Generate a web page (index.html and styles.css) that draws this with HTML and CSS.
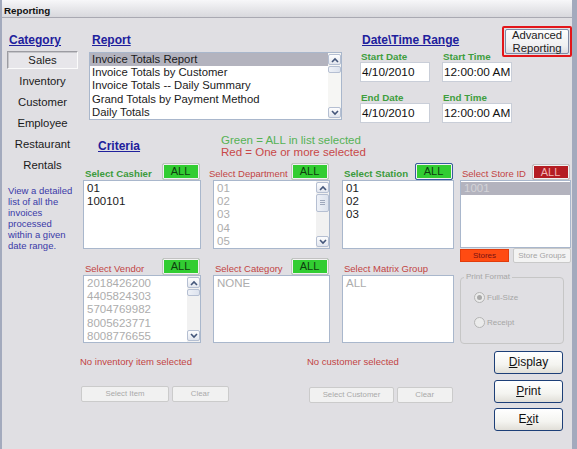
FILE: index.html
```html
<!DOCTYPE html>
<html lang="en">

<head>
    <meta charset="UTF-8">
    <meta name="viewport" content="width=device-width, initial-scale=1.0">
    <title>Reporting</title>
    <link rel="stylesheet" href="styles.css">
</head>

<body>
    <div class="window">
        <div class="titlebar">Reporting</div>
        <div class="client">
            <!-- left: category list -->
            <div class="category">
                <div class="head">Category</div>
                <div class="cat-active">Sales</div>
                <div class="cat-list">
                    <div class="cat-item">Inventory</div>
                    <div class="cat-item">Customer</div>
                    <div class="cat-item">Employee</div>
                    <div class="cat-item">Restaurant</div>
                    <div class="cat-item">Rentals</div>
                </div>
                <div class="desc">View a detailed<br>list of all the<br>invoices<br>processed<br>within a given<br>date range.</div>
            </div>

            <div class="main">
                <div class="top">
                    <div class="report">
                        <div class="head">Report</div>
                        <div class="listbox report-list">
                            <div class="items">
                                <div class="item sel">Invoice Totals Report</div>
                                <div class="item">Invoice Totals by Customer</div>
                                <div class="item">Invoice Totals -- Daily Summary</div>
                                <div class="item">Grand Totals by Payment Method</div>
                                <div class="item">Daily Totals</div>
                            </div>
                            <div class="sb">
                                <span class="sb-btn"><svg width="8" height="6" viewBox="0 0 8 6"><polyline points="1,5 4,2 7,5" /></svg></span>
                                <span class="thumb thumb-sm"></span>
                                <span class="sb-fill"></span>
                                <span class="sb-btn"><svg width="8" height="6" viewBox="0 0 8 6"><polyline points="1,1 4,4 7,1" /></svg></span>
                            </div>
                        </div>
                    </div>

                    <div class="dates">
                        <div class="dates-head">
                            <div class="head">Date\Time Range</div>
                            <div class="adv">
                                <div class="adv-btn"><span>Advanced</span><span>Reporting</span></div>
                            </div>
                        </div>
                        <div class="fields">
                            <div class="field">
                                <span class="field-label">Start Date</span>
                                <span class="input">4/10/2010</span>
                            </div>
                            <div class="field">
                                <span class="field-label">Start Time</span>
                                <span class="input">12:00:00 AM</span>
                            </div>
                            <div class="field">
                                <span class="field-label">End Date</span>
                                <span class="input">4/10/2010</span>
                            </div>
                            <div class="field">
                                <span class="field-label">End Time</span>
                                <span class="input">12:00:00 AM</span>
                            </div>
                        </div>
                    </div>
                </div>

                <div class="crit-head">
                    <div class="head crit-title">Criteria</div>
                    <div class="legend">
                        <div class="legend-green">Green = ALL in list selected</div>
                        <div class="legend-red">Red = One or more selected</div>
                    </div>
                </div>

                <div class="crit">
                    <div class="col c1">
                        <div class="cell-head">
                            <span class="lbl lbl-green">Select Cashier</span>
                            <span class="all">ALL</span>
                        </div>
                        <div class="listbox list-tall">
                            <div class="items">
                                <div class="item">01</div>
                                <div class="item">100101</div>
                            </div>
                        </div>
                        <div class="cell-head row2">
                            <span class="lbl lbl-red">Select Vendor</span>
                            <span class="all">ALL</span>
                        </div>
                        <div class="listbox list-short">
                            <div class="items dim">
                                <div class="item">2018426200</div>
                                <div class="item">4405824303</div>
                                <div class="item">5704769982</div>
                                <div class="item">8005623771</div>
                                <div class="item">8008776655</div>
                            </div>
                            <div class="sb sb-dis">
                                <span class="sb-btn"><svg width="8" height="6" viewBox="0 0 8 6"><polyline points="1,5 4,2 7,5" /></svg></span>
                                <span class="thumb thumb-sm"></span>
                                <span class="sb-fill"></span>
                                <span class="sb-btn"><svg width="8" height="6" viewBox="0 0 8 6"><polyline points="1,1 4,4 7,1" /></svg></span>
                            </div>
                        </div>
                    </div>

                    <div class="col c2">
                        <div class="cell-head">
                            <span class="lbl lbl-red lbl-dept">Select Department</span>
                            <span class="all">ALL</span>
                        </div>
                        <div class="listbox list-tall">
                            <div class="items dim">
                                <div class="item">01</div>
                                <div class="item">02</div>
                                <div class="item">03</div>
                                <div class="item">04</div>
                                <div class="item">05</div>
                            </div>
                            <div class="sb sb-dis">
                                <span class="sb-btn"><svg width="8" height="6" viewBox="0 0 8 6"><polyline points="1,5 4,2 7,5" /></svg></span>
                                <span class="thumb thumb-lg"></span>
                                <span class="sb-fill"></span>
                                <span class="sb-btn"><svg width="8" height="6" viewBox="0 0 8 6"><polyline points="1,1 4,4 7,1" /></svg></span>
                            </div>
                        </div>
                        <div class="cell-head row2">
                            <span class="lbl lbl-red">Select Category</span>
                            <span class="all">ALL</span>
                        </div>
                        <div class="listbox list-short">
                            <div class="items dim">
                                <div class="item">NONE</div>
                            </div>
                        </div>
                    </div>

                    <div class="col c3">
                        <div class="cell-head">
                            <span class="lbl lbl-green">Select Station</span>
                            <span class="all all-focus">ALL</span>
                        </div>
                        <div class="listbox list-tall">
                            <div class="items">
                                <div class="item">01</div>
                                <div class="item">02</div>
                                <div class="item">03</div>
                            </div>
                        </div>
                        <div class="cell-head row2">
                            <span class="lbl lbl-red">Select Matrix Group</span>
                        </div>
                        <div class="listbox list-short">
                            <div class="items dim">
                                <div class="item">ALL</div>
                            </div>
                        </div>
                    </div>

                    <div class="col c4">
                        <div class="cell-head">
                            <span class="lbl lbl-red">Select Store ID</span>
                            <span class="all all-red">ALL</span>
                        </div>
                        <div class="listbox store-list">
                            <div class="items dim">
                                <div class="item sel">1001</div>
                            </div>
                        </div>
                        <div class="store-tabs">
                            <span class="stores">Stores</span>
                            <span class="store-groups">Store Groups</span>
                        </div>
                        <fieldset class="print">
                            <legend>Print Format</legend>
                            <div class="radio first"><span class="dot on"></span>Full-Size</div>
                            <div class="radio"><span class="dot"></span>Receipt</div>
                        </fieldset>
                    </div>
                </div>

                <div class="bottom">
                    <div class="grp grp1">
                        <div class="msg">No inventory item selected</div>
                        <div class="btn-row">
                            <span class="dis-btn w88">Select Item</span>
                            <span class="dis-btn w57">Clear</span>
                        </div>
                    </div>
                    <div class="grp grp2">
                        <div class="msg">No customer selected</div>
                        <div class="btn-row">
                            <span class="dis-btn w85">Select Customer</span>
                            <span class="dis-btn w56">Clear</span>
                        </div>
                    </div>
                    <div class="actions">
                        <div class="xp-btn"><u>D</u>isplay</div>
                        <div class="xp-btn"><u>P</u>rint</div>
                        <div class="xp-btn">E<u>x</u>it</div>
                    </div>
                </div>
            </div>
        </div>
    </div>
</body>

</html>
```

FILE: styles.css
```css
* {
    box-sizing: border-box;
}

body {
    margin: 0;
    font-family: "Liberation Sans", Arial, sans-serif;
    background-color: #e0dfe3;
}

.window {
    width: 577px;
    height: 449px;
    background-color: #e0dfe3;
    border-left: 2px solid #a3aabd;
    border-right: 5px solid #a3aabd;
    overflow: hidden;
}

.titlebar {
    height: 18px;
    padding: 4px 0 0 2px;
    font-size: 9.8px;
    line-height: 14px;
    font-weight: bold;
    color: #111;
    background: linear-gradient(#f7f7f9, #e9e9ec 45%, #d8d8dd);
    border-bottom: 1px solid #a9a9b2;
}

.client {
    display: flex;
    height: 431px;
}

.head {
    font-size: 12px;
    line-height: 14px;
    font-weight: bold;
    color: #20209c;
    text-decoration: underline;
}

/* category column */
.category {
    width: 78px;
    padding-top: 15px;
}

.category .head {
    padding-left: 7px;
}

.cat-active {
    width: 71px;
    height: 18px;
    margin: 4px 0 0 5px;
    border: 1px solid;
    border-color: #9c9ca2 #fbfbfb #fbfbfb #9c9ca2;
    box-shadow: inset 1px 1px 0 #c6c6ca;
    background-color: #e7e6ea;
    text-align: center;
    font-size: 11.3px;
    line-height: 16px;
    color: #1a1a1a;
}

.cat-list {
    width: 71px;
    margin: 2px 0 0 5px;
}

.cat-item {
    text-align: center;
    font-size: 11.3px;
    line-height: 21px;
    color: #1a1a1a;
}

.desc {
    margin-top: 9px;
    padding-left: 6px;
    font-size: 9.5px;
    line-height: 11px;
    color: #3a3aa8;
}

/* main area */
.main {
    width: 492px;
}

.top {
    display: flex;
    height: 105px;
    padding-top: 8px;
}

.report {
    width: 253px;
    margin-left: 9px;
    padding-top: 7px;
}

.report .head {
    padding-left: 3px;
}

.listbox {
    display: flex;
    background-color: #fff;
    border: 1px solid #a9b7cc;
}

.report-list {
    height: 68px;
    margin-top: 5px;
}

.items {
    flex: 1;
    padding-top: 1px;
    font-size: 11.5px;
    line-height: 13.2px;
    color: #1a1a1a;
    white-space: nowrap;
    overflow: hidden;
}

.report-list .items {
    padding-top: 0;
    font-size: 11.3px;
}

.item {
    padding-left: 3px;
}

.report-list .item {
    padding-left: 2px;
}

.item.sel {
    background-color: #b3b3be;
}

.dim .item {
    color: #adadad;
}

.dim .item.sel {
    color: #d4d4d8;
}

/* scrollbars */
.sb {
    display: flex;
    flex-direction: column;
    width: 13px;
    padding: 1px 0;
    background-color: #f6f6f4;
}

.sb-dis {
    background-color: #f1f1f1;
}

.sb-btn {
    display: flex;
    justify-content: center;
    align-items: center;
    height: 11px;
    border: 1px solid #b5bfd2;
    border-radius: 2px;
    background: linear-gradient(#fdfdfe, #e2e6ee);
}

.sb-btn svg polyline {
    fill: none;
    stroke: #44567a;
    stroke-width: 1.6;
}

.thumb {
    margin-top: 1px;
    border: 1px solid #b5bfd2;
    border-radius: 2px;
    background: linear-gradient(90deg, #eef1f7, #dde3ee);
}

.thumb-sm {
    height: 7px;
}

.thumb-lg {
    height: 18px;
}

.thumb-lg::after {
    content: "";
    display: block;
    width: 5px;
    height: 5px;
    margin: 5px auto 0;
    background: repeating-linear-gradient(#9ea8bc 0 1px, transparent 1px 2px);
}

.sb-fill {
    flex: 1;
}

/* date / time */
.dates {
    width: 212px;
    margin-left: 18px;
}

.dates-head {
    display: flex;
    justify-content: space-between;
    height: 25px;
}

.dates-head .head {
    margin-top: 7px;
    padding-left: 2px;
}

.adv {
    flex-shrink: 0;
    width: 70px;
    height: 31px;
    padding: 1px;
    border: 2px solid #e3161a;
    border-radius: 2px;
}

.adv-btn {
    display: flex;
    flex-direction: column;
    justify-content: center;
    align-items: center;
    height: 100%;
    border: 1px solid #7e8aa6;
    border-radius: 2px;
    background: linear-gradient(#fdfdfd, #efeff1 70%, #dcdce2);
    font-size: 11.3px;
    line-height: 13px;
    color: #222;
}

.fields {
    display: grid;
    grid-template-columns: 70px 70px;
    column-gap: 12px;
    row-gap: 10px;
}

.field-label {
    display: block;
    padding-left: 1px;
    font-size: 9.8px;
    line-height: 11px;
    font-weight: bold;
    color: #3e9e3e;
}

.input {
    display: block;
    height: 20px;
    padding-left: 1px;
    background-color: #fff;
    border: 1px solid #c9ced8;
    font-size: 11.8px;
    line-height: 18px;
    color: #111;
    white-space: nowrap;
    overflow: hidden;
}

/* criteria */
.crit-head {
    display: flex;
    height: 29px;
    margin-top: 11px;
}

.crit-title {
    width: 141px;
    padding: 5px 0 0 18px;
}

.legend {
    font-size: 11.5px;
    line-height: 12.3px;
}

.legend-green {
    color: #55b255;
}

.legend-red {
    color: #c84848;
}

.crit {
    display: flex;
    height: 181px;
    margin-left: 3px;
}

.c1 {
    width: 130px;
    padding-right: 12px;
}

.c2 {
    width: 129px;
    padding-right: 12px;
}

.c3 {
    width: 118px;
    padding-right: 6px;
}

.c4 {
    width: 111px;
}

.cell-head {
    display: flex;
    justify-content: space-between;
    align-items: flex-end;
    height: 17px;
}

.row2 {
    margin-top: 9px;
}

.lbl {
    padding-left: 2px;
    font-size: 9.5px;
    line-height: 12px;
    white-space: nowrap;
}

.lbl-green {
    font-size: 9.7px;
    font-weight: bold;
    color: #3b9b3b;
}

.lbl-red {
    color: #c24444;
}

.lbl-dept {
    margin-left: -6px;
}

.all {
    align-self: flex-start;
    width: 38px;
    height: 17px;
    margin-right: 1.5px;
    border: 1px solid #c2c2c2;
    border-radius: 2px;
    background-color: #32cd32;
    box-shadow: inset 0 0 0 1px #f2f2f2;
    text-align: center;
    font-size: 11px;
    line-height: 15px;
    color: #0f3d0f;
}

.all-focus {
    border-color: #3a5ba0;
}

.all-red {
    height: 16px;
    margin-top: 1px;
    background-color: #b41c22;
    line-height: 14px;
    color: #f2b4b4;
}

.list-tall {
    height: 69px;
}

.list-short {
    height: 68px;
}

.store-list {
    height: 68px;
}

.store-tabs {
    display: flex;
    justify-content: space-between;
    align-items: center;
    height: 15px;
}

.stores {
    width: 49px;
    height: 13px;
    background-color: #ff4b12;
    border: 1px solid #e23c0c;
    text-align: center;
    font-size: 8px;
    line-height: 11px;
    color: #7a1212;
}

.store-groups {
    width: 58px;
    height: 15px;
    background-color: #f3f3f3;
    border: 1px solid #c9c9c9;
    border-radius: 2px;
    text-align: center;
    font-size: 8px;
    line-height: 13px;
    color: #a5a5a5;
}

.print {
    width: 104px;
    height: 73px;
    margin: 8px 0 0;
    padding: 0;
    border: 1px solid #c6c6c6;
    border-radius: 4px;
}

.print legend {
    margin-left: 3px;
    padding: 0 2px;
    font-size: 8px;
    line-height: 12px;
    color: #a6a6a6;
}

.radio {
    display: flex;
    align-items: center;
    gap: 2px;
    height: 13px;
    margin: 12px 0 0 13px;
    font-size: 8px;
    color: #a6a6a6;
}

.radio.first {
    margin-top: 8px;
}

.dot {
    display: flex;
    justify-content: center;
    align-items: center;
    width: 11px;
    height: 11px;
    border: 1px solid #b4b4b4;
    border-radius: 50%;
    background-color: #ebebeb;
}

.dot.on::after {
    content: "";
    width: 5px;
    height: 5px;
    border-radius: 50%;
    background-color: #a9a9a9;
}

/* bottom */
.bottom {
    display: flex;
    height: 87px;
}

.grp1 {
    width: 227px;
}

.grp2 {
    width: 146px;
}

.msg {
    margin-top: 12px;
    font-size: 9.5px;
    line-height: 12px;
    color: #c24444;
}

.btn-row {
    display: flex;
    gap: 2.7px;
    margin-top: 18px;
    padding-left: 1px;
}

.grp2 .btn-row {
    margin-top: 19px;
    padding-left: 2px;
}

.dis-btn {
    height: 16px;
    border: 1px solid #cbcbcb;
    border-radius: 2px;
    background-color: #f1f1f1;
    text-align: center;
    font-size: 7.8px;
    line-height: 14px;
    color: #a9a9a9;
}

.w88 {
    width: 88px;
}

.w57 {
    width: 57px;
}

.w85 {
    width: 85px;
}

.w56 {
    width: 56px;
}

.actions {
    display: flex;
    flex-direction: column;
    gap: 5.5px;
    margin: 7px 0 0 41px;
}

.xp-btn {
    width: 69px;
    height: 23px;
    border: 1px solid #1d3f78;
    border-radius: 3px;
    background: linear-gradient(#ffffff, #f4f4f0 60%, #e1dfd8);
    text-align: center;
    font-size: 12px;
    line-height: 21px;
    color: #111;
}
```
